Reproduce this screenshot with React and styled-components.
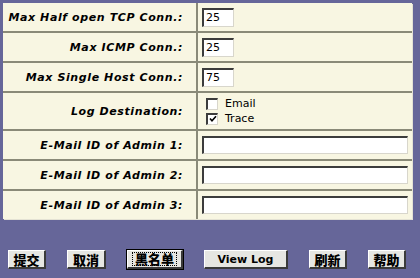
import React from "react";
import styled, { createGlobalStyle } from "styled-components";

const Global = createGlobalStyle`
  html, body { margin: 0; padding: 0; background: #666699; }
  body {
    width: 420px;
    height: 278px;
    overflow: hidden;
    font-family: "DejaVu Sans", Verdana, sans-serif;
  }
`;

const Page = styled.div`
  padding: 3px 0 0 3px;
`;

const Form = styled.div`
  width: 409px;
  display: grid;
  grid-template-columns: 193px 214px;
  grid-template-rows: 28px 28px 28px 36px 28px 28px 28px;
  gap: 2px;
  background: #8a8a78;
  box-shadow: 1px 1px 0 #e4e2d4;
`;

const Label = styled.div`
  background: #f8f6e2;
  display: flex;
  align-items: center;
  justify-content: flex-end;
  padding-right: 13px;
  font-family: "DejaVu Sans", Verdana, sans-serif;
  font-weight: bold;
  font-style: italic;
  font-size: 11px;
  letter-spacing: 0.6px;
  color: #000;
  white-space: nowrap;
`;

const Value = styled.div`
  background: #f8f6e2;
  display: flex;
  align-items: center;
  padding-left: 4px;
`;

const TextInput = styled.input`
  box-sizing: border-box;
  width: ${(p) => p.$w}px;
  height: ${(p) => p.$h}px;
  margin: 0;
  padding: 0 2px;
  background: #fff;
  border-style: solid;
  border-width: 2px 1px 1px 2px;
  border-color: #3c3c3c #d8d6cc #d8d6cc #3c3c3c;
  font-family: "DejaVu Sans", Verdana, sans-serif;
  font-size: 11px;
  color: #000;
  outline: none;
`;

const Checks = styled.div`
  display: flex;
  flex-direction: column;
  gap: 2px;
  padding-left: 4px;
`;

const CheckRow = styled.label`
  display: flex;
  align-items: center;
  gap: 7px;
  font-family: "DejaVu Sans", Verdana, sans-serif;
  font-size: 11px;
  color: #000;
  height: 13px;
`;

const Box = styled.span`
  box-sizing: border-box;
  width: 12px;
  height: 12px;
  background: #fff;
  border-style: solid;
  border-width: 2px 1px 1px 2px;
  border-color: #3c3c3c #d8d6cc #d8d6cc #3c3c3c;
  display: flex;
  align-items: center;
  justify-content: center;
`;

const Bar = styled.div`
  display: flex;
  gap: 21px;
  margin: 31px 0 0 5px;
`;

const Button = styled.button`
  box-sizing: border-box;
  width: ${(p) => p.$w}px;
  height: 19px;
  margin: 0;
  padding: 0;
  background: #e6e6e2;
  border-style: solid;
  border-width: 1px 2px 2px 1px;
  border-color: #ffffff #3a3a3a #3a3a3a #ffffff;
  font-family: "DejaVu Sans", "Noto Sans CJK SC", sans-serif;
  font-weight: bold;
  font-size: 11px;
  color: #000;
  display: flex;
  align-items: center;
  justify-content: center;
  line-height: 1;
  ${(p) =>
    p.$cjk &&
    `font-family: "Noto Sans CJK SC", sans-serif; font-size: 13px; font-weight: 900;`}
  ${(p) =>
    p.$default &&
    `outline: 1px solid #000; outline-offset: 0; border-color: #fff #3a3a3a #3a3a3a #fff;`}
`;

const Focus = styled.span`
  border: 1px dotted #000;
  padding: 0 2px;
  line-height: 12px;
`;

const Check = () => (
  <svg width="8" height="8" viewBox="0 0 8 8">
    <path d="M1 3.5 L3 5.8 L7 1.2" stroke="#000" strokeWidth="1.6" fill="none" />
  </svg>
);

export default function App() {
  return (
    <>
      <Global />
      <Page>
        <Form>
          <Label>Max Half open TCP Conn.:</Label>
          <Value>
            <TextInput $w={32} $h={19} defaultValue="25" />
          </Value>
          <Label>Max ICMP Conn.:</Label>
          <Value>
            <TextInput $w={32} $h={19} defaultValue="25" />
          </Value>
          <Label>Max Single Host Conn.:</Label>
          <Value>
            <TextInput $w={32} $h={19} defaultValue="75" />
          </Value>
          <Label>Log Destination:</Label>
          <Value>
            <Checks>
              <CheckRow>
                <Box />
                Email
              </CheckRow>
              <CheckRow>
                <Box>
                  <Check />
                </Box>
                Trace
              </CheckRow>
            </Checks>
          </Value>
          <Label>E-Mail ID of Admin 1:</Label>
          <Value>
            <TextInput $w={206} $h={18} />
          </Value>
          <Label>E-Mail ID of Admin 2:</Label>
          <Value>
            <TextInput $w={206} $h={18} />
          </Value>
          <Label>E-Mail ID of Admin 3:</Label>
          <Value>
            <TextInput $w={206} $h={18} />
          </Value>
        </Form>
        <Bar>
          <Button $w={38} $cjk>提交</Button>
          <Button $w={39} $cjk>取消</Button>
          <Button $w={56} $cjk $default>
            <Focus>黑名单</Focus>
          </Button>
          <Button $w={84}>View Log</Button>
          <Button $w={38} $cjk>刷新</Button>
          <Button $w={38} $cjk>帮助</Button>
        </Bar>
      </Page>
    </>
  );
}
